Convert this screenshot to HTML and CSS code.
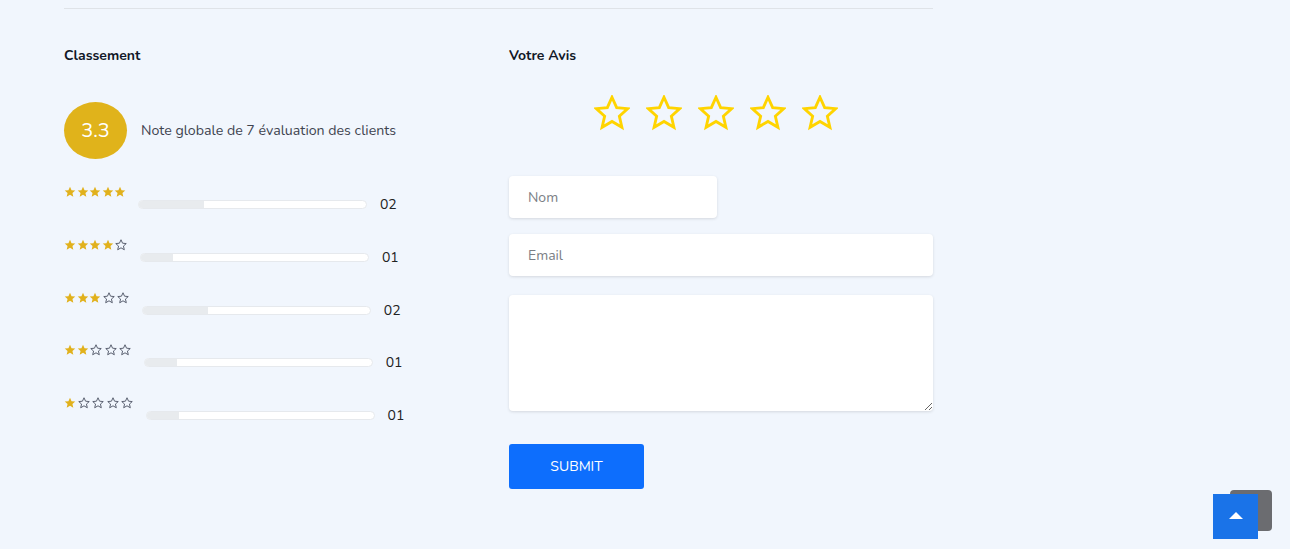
FILE: index.html
```html
<!DOCTYPE html>
<html lang="fr">
<head>
<meta charset="utf-8">
<title>Avis</title>
<link rel="stylesheet" href="styles.css">
</head>
<body>
<svg width="0" height="0" class="defs">
  <defs>
    <path id="star" d="M12 1.5l3.1 6.9 7.4.7-5.6 5 1.7 7.4L12 17.6l-6.6 3.9 1.7-7.4-5.6-5 7.4-.7z"/>
  </defs>
</svg>
<main class="section">
  <div class="grid">
    <div class="col">
      <h4 class="title">Classement</h4>
      <div class="overall">
        <div class="score">3.3</div>
        <p class="overall-text">Note globale de 7 évaluation des clients</p>
      </div>
      <div class="rows">
        <div class="row">
          <div class="stars">
            <span class="s on"><svg viewBox="0 0 24 24"><use href="#star"/></svg></span><span class="s on"><svg viewBox="0 0 24 24"><use href="#star"/></svg></span><span class="s on"><svg viewBox="0 0 24 24"><use href="#star"/></svg></span><span class="s on"><svg viewBox="0 0 24 24"><use href="#star"/></svg></span><span class="s on"><svg viewBox="0 0 24 24"><use href="#star"/></svg></span>
          </div>
          <div class="bar"><div class="fill" style="width:28.6%"></div></div>
          <span class="count">02</span>
        </div>
        <div class="row">
          <div class="stars">
            <span class="s on"><svg viewBox="0 0 24 24"><use href="#star"/></svg></span><span class="s on"><svg viewBox="0 0 24 24"><use href="#star"/></svg></span><span class="s on"><svg viewBox="0 0 24 24"><use href="#star"/></svg></span><span class="s on"><svg viewBox="0 0 24 24"><use href="#star"/></svg></span><span class="s off"><svg viewBox="0 0 24 24"><use href="#star"/></svg></span>
          </div>
          <div class="bar"><div class="fill" style="width:14.3%"></div></div>
          <span class="count">01</span>
        </div>
        <div class="row">
          <div class="stars">
            <span class="s on"><svg viewBox="0 0 24 24"><use href="#star"/></svg></span><span class="s on"><svg viewBox="0 0 24 24"><use href="#star"/></svg></span><span class="s on"><svg viewBox="0 0 24 24"><use href="#star"/></svg></span><span class="s off"><svg viewBox="0 0 24 24"><use href="#star"/></svg></span><span class="s off"><svg viewBox="0 0 24 24"><use href="#star"/></svg></span>
          </div>
          <div class="bar"><div class="fill" style="width:28.6%"></div></div>
          <span class="count">02</span>
        </div>
        <div class="row">
          <div class="stars">
            <span class="s on"><svg viewBox="0 0 24 24"><use href="#star"/></svg></span><span class="s on"><svg viewBox="0 0 24 24"><use href="#star"/></svg></span><span class="s off"><svg viewBox="0 0 24 24"><use href="#star"/></svg></span><span class="s off"><svg viewBox="0 0 24 24"><use href="#star"/></svg></span><span class="s off"><svg viewBox="0 0 24 24"><use href="#star"/></svg></span>
          </div>
          <div class="bar"><div class="fill" style="width:14.3%"></div></div>
          <span class="count">01</span>
        </div>
        <div class="row">
          <div class="stars">
            <span class="s on"><svg viewBox="0 0 24 24"><use href="#star"/></svg></span><span class="s off"><svg viewBox="0 0 24 24"><use href="#star"/></svg></span><span class="s off"><svg viewBox="0 0 24 24"><use href="#star"/></svg></span><span class="s off"><svg viewBox="0 0 24 24"><use href="#star"/></svg></span><span class="s off"><svg viewBox="0 0 24 24"><use href="#star"/></svg></span>
          </div>
          <div class="bar"><div class="fill" style="width:14.3%"></div></div>
          <span class="count">01</span>
        </div>
      </div>
    </div>
    <div class="col">
      <h4 class="title">Votre Avis</h4>
      <div class="pick">
        <svg viewBox="0 0 24 24"><use href="#star"/></svg>
        <svg viewBox="0 0 24 24"><use href="#star"/></svg>
        <svg viewBox="0 0 24 24"><use href="#star"/></svg>
        <svg viewBox="0 0 24 24"><use href="#star"/></svg>
        <svg viewBox="0 0 24 24"><use href="#star"/></svg>
      </div>
      <form class="form">
        <input class="field short" type="text" placeholder="Nom">
        <input class="field" type="email" placeholder="Email">
        <textarea class="field area"></textarea>
        <button class="submit" type="button">SUBMIT</button>
      </form>
    </div>
  </div>
</main>
<div class="totop-back"></div>
<a class="totop" href="#"><span class="tri"></span></a>
</body>
</html>
```
FILE: styles.css
```css
* { box-sizing: border-box; }
html, body { margin: 0; height: 100%; }
body {
  background: #f1f6fd;
  font-family: Nunito, "Noto Sans", "Open Sans", sans-serif;
  color: #444;
  overflow: hidden;
}
.defs { position: absolute; }
.section {
  width: 869px;
  margin: 8px 0 0 64px;
  border-top: 1px solid #dfe3e8;
  padding-top: 38px;
}
.grid {
  display: grid;
  grid-template-columns: 1fr 1fr;
  column-gap: 22px;
}
.title {
  margin: 0;
  font-size: 14px;
  font-weight: 700;
  color: #111827;
  line-height: 18px;
}
.overall {
  display: flex;
  align-items: center;
  margin-top: 37px;
}
.score {
  width: 63px;
  height: 57px;
  border-radius: 50%;
  background: #e0b31b;
  color: #fff;
  font-size: 20px;
  display: flex;
  align-items: center;
  justify-content: center;
}
.overall-text {
  margin: 0 0 0 14px;
  font-size: 14.2px;
  color: #3f4450;
}
.rows { margin-top: 26px; }
.row {
  display: flex;
  align-items: flex-start;
  height: 52.75px;
}
.stars { display: flex; margin-top: 1px; }
.s { display: inline-flex; }
.s svg { width: 12px; height: 12px; }
.s.on { width: 12.6px; }
.s.on svg { fill: #e1b11c; }
.s.off { width: 14.5px; padding-left: 1px; }
.s.off svg { fill: none; stroke: #5a6070; stroke-width: 2; }
.bar {
  width: 229px;
  height: 9px;
  margin: 15px 0 0 11px;
  background: #fff;
  border: 1px solid #e6e9ed;
  border-radius: 5px;
  overflow: hidden;
}
.fill { height: 100%; background: #e8ebee; }
.count {
  margin: 11px 0 0 13px;
  font-size: 14px;
  color: #222;
  line-height: 18px;
}
.pick {
  display: flex;
  justify-content: center;
  gap: 16px;
  margin: 30px 0 0 -11px;
}
.pick svg {
  width: 36px;
  height: 36px;
  fill: none;
  stroke: #ffd400;
  stroke-width: 1.9;
}
.form {
  display: flex;
  flex-direction: column;
  align-items: flex-start;
  margin-top: 45px;
}
.field {
  width: 424px;
  height: 42px;
  border: 0;
  border-radius: 4px;
  background: #fff;
  box-shadow: 0 1px 3px rgba(0,0,0,0.12);
  padding: 0 19px;
  font-family: inherit;
  font-size: 14px;
  color: #333;
  margin-bottom: 16px;
}
.field::placeholder { color: #7a7e85; }
.field.short { width: 208px; }
.area {
  height: 116px;
  margin-top: 3px;
  resize: vertical;
}
.submit {
  margin-top: 17px;
  width: 135px;
  height: 45px;
  border: 0;
  border-radius: 3px;
  background: #0d6efd;
  color: #fff;
  font-family: inherit;
  font-size: 14px;
}
.totop-back {
  position: fixed;
  left: 1230px;
  top: 490px;
  width: 42px;
  height: 41px;
  border-radius: 4px;
  background: #6b6c70;
}
.totop {
  position: fixed;
  left: 1213px;
  top: 494px;
  width: 45px;
  height: 45px;
  background: #1a73e8;
  display: flex;
  align-items: center;
  justify-content: center;
}
.tri {
  width: 0;
  height: 0;
  border-left: 7px solid transparent;
  border-right: 7px solid transparent;
  border-bottom: 7px solid #fff;
  margin-top: -2px;
}
```
